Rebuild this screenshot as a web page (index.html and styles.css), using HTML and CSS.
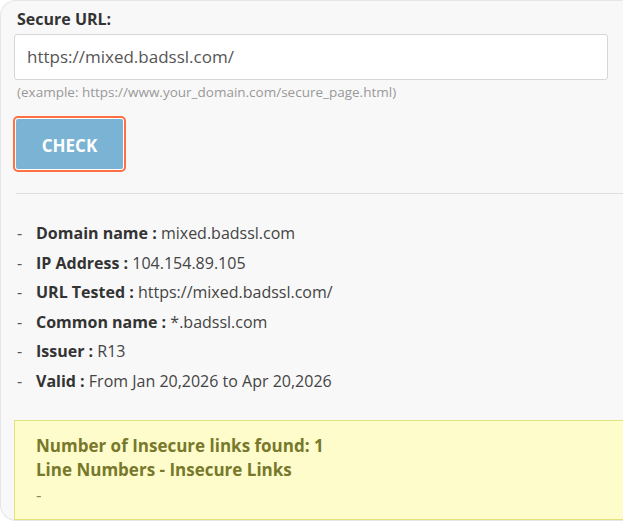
FILE: index.html
```html
<!DOCTYPE html>
<html>
<head>
<meta charset="utf-8">
<link rel="stylesheet" href="styles.css">
</head>
<body>
<div class="panel">
  <div class="label">Secure URL:</div>
  <div class="input">https://mixed.badssl.com/</div>
  <div class="hint">(example: https://www.your_domain.com/secure_page.html)</div>
  <button class="check">CHECK</button>
  <hr class="rule">
  <ul class="info">
    <li><span class="dash">-</span><b>Domain name :</b>&nbsp;mixed.badssl.com</li>
    <li><span class="dash">-</span><b>IP Address :</b>&nbsp;104.154.89.105</li>
    <li><span class="dash">-</span><b>URL Tested :</b>&nbsp;https://mixed.badssl.com/</li>
    <li><span class="dash">-</span><b>Common name :</b>&nbsp;*.badssl.com</li>
    <li><span class="dash">-</span><b>Issuer :</b>&nbsp;R13</li>
    <li><span class="dash">-</span><b>Valid :</b>&nbsp;From Jan 20,2026 to Apr 20,2026</li>
  </ul>
  <div class="result">
    <div class="strong">Number of Insecure links found: 1</div>
    <div class="strong">Line Numbers - Insecure Links</div>
    <div class="plain">-</div>
  </div>
</div>
</body>
</html>
```
FILE: styles.css
```css
html, body {
  margin: 0;
  padding: 0;
  background: #ffffff;
  overflow: hidden;
  font-family: "Open Sans", "Liberation Sans", sans-serif;
}
.panel {
  width: 660px;
  height: 521px;
  box-sizing: border-box;
  background: #f8f8f8;
  border: 1px solid #e6e6ea;
  border-right: none;
  border-radius: 16px 0 0 16px;
  padding: 7px 0 0 13px;
}
.label {
  font-size: 16px;
  font-weight: 700;
  line-height: 22px;
  color: #333;
  margin-left: 3px;
}
.input {
  margin-top: 4px;
  width: 594px;
  height: 46px;
  box-sizing: border-box;
  background: #fff;
  border: 1px solid #d6d6d6;
  border-radius: 3px;
  padding-left: 12px;
  font-size: 17px;
  line-height: 44px;
  color: #555;
}
.hint {
  margin-top: 3px;
  margin-left: 3px;
  font-size: 13.5px;
  line-height: 19px;
  color: #999;
}
.check {
  display: block;
  margin: 17px 0 0 2px;
  width: 107px;
  height: 50px;
  border: none;
  border-radius: 2px;
  background: #7ab3d4;
  color: #fff;
  font-family: "Open Sans", "Liberation Sans", sans-serif;
  font-size: 17px;
  font-weight: 700;
  box-shadow: 0 0 0 1px #fff, 0 0 0 3px #ff7043;
  padding: 2px 0 0 0;
}
.rule {
  margin: 24px 0 0 2px;
  border: none;
  border-top: 1px solid #dedede;
  height: 0;
}
.info {
  list-style: none;
  margin: 25px 0 0 0;
  padding: 0 0 0 3px;
  font-size: 16px;
  line-height: 29.6px;
  color: #444;
}
.info b {
  color: #333;
}
.dash {
  display: inline-block;
  width: 19px;
  color: #555;
}
.result {
  margin-top: 23px;
  height: 100px;
  box-sizing: border-box;
  background: #fdfcca;
  border: 1px solid #e3e37a;
  border-right: none;
  padding: 13px 0 0 21px;
  font-size: 17px;
  line-height: 24.5px;
  color: #78782c;
}
.strong {
  font-weight: 700;
}
.plain {
  font-weight: 400;
  color: #8a8a50;
}
```
